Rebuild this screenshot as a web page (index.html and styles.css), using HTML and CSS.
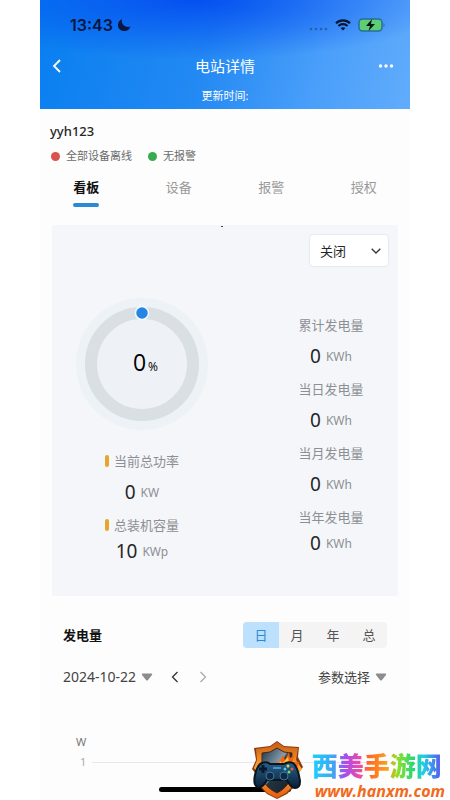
FILE: index.html
```html
<!DOCTYPE html>
<html lang="zh-CN">
<head>
    <meta charset="UTF-8">
    <meta name="viewport" content="width=device-width, initial-scale=1">
    <title>电站详情</title>
    <link rel="stylesheet" href="styles.css">
</head>
<body>
    <div class="app">
        <header class="header">
            <div class="status-bar">
                <span class="clock">13:43</span>
                <svg class="moon" width="14" height="14" viewBox="0 0 14 14"><path d="M5 1C3.600 5.500 8 10.300 13.500 8.500C12.500 11.800 9.500 13.500 6.300 13C3 12.500 .8 10 1 6.700C1.200 4 2.800 1.900 5 1Z" fill="#0a1740"/></svg>
                <span class="status-icons">
                    <svg width="20" height="4" viewBox="0 0 20 4" fill="#2a5ea8"><circle cx="3" cy="2" r="1.300"/><circle cx="8" cy="2" r="1.300"/><circle cx="13" cy="2" r="1.300"/><circle cx="18" cy="2" r="1.300"/></svg>
                    <svg width="16" height="12" viewBox="0 0 16 12" fill="none" stroke="#08152f" stroke-width="2.200"><path d="M1 4.300C5 .4 11 .4 15 4.300M3.500 7C6 4.600 10 4.600 12.500 7"/><path d="M5.600 9.100C7 7.900 9 7.900 10.400 9.100L8 11.600Z" fill="#08152f" stroke="none"/></svg>
                    <svg width="28" height="14" viewBox="0 0 28 14"><rect x="1" y="1" width="23" height="12" rx="3.500" fill="#5bcf72" stroke="#2b6c9c" stroke-width="1.500"/><path d="M25.500 5V9C27 8.500 27 5.500 25.500 5Z" fill="#2b6c9c"/><path d="M14 1L8 8H12L10.500 13L17 6H13Z" fill="#06151c"/></svg>
                </span>
            </div>
            <nav class="nav-bar">
                <button class="icon-btn" type="button" aria-label="返回">
                    <svg width="10" height="14" viewBox="0 0 10 14"><path d="M8 1L2 7L8 13" fill="none" stroke="#fff" stroke-width="1.800"/></svg>
                </button>
                <h1 class="title">电站详情</h1>
                <button class="icon-btn icon-btn-right" type="button" aria-label="更多">
                    <svg width="16" height="4" viewBox="0 0 16 4" fill="#fff"><circle cx="2.500" cy="2" r="1.700"/><circle cx="8" cy="2" r="1.700"/><circle cx="13.500" cy="2" r="1.700"/></svg>
                </button>
            </nav>
            <p class="updated">更新时间:</p>
        </header>

        <main class="sheet">
            <h2 class="station">yyh123</h2>
            <div class="states">
                <span class="state offline">全部设备离线</span>
                <span class="state normal">无报警</span>
            </div>

            <div class="tabs">
                <button class="tab active" type="button">看板</button>
                <button class="tab" type="button">设备</button>
                <button class="tab" type="button">报警</button>
                <button class="tab" type="button">授权</button>
            </div>

            <section class="panel">
                <div class="panel-top">
                    <select class="mode" aria-label="刷新">
                        <option>关闭</option>
                    </select>
                </div>
                <div class="overview">
                    <div class="column">
                        <div class="dial">
                            <svg class="dial-ring" viewBox="0 0 132 132">
                                <circle cx="66" cy="66" r="66" fill="#edf2f7"/>
                                <circle cx="66" cy="66" r="51" fill="#eef2f6" stroke="#d9dfe2" stroke-width="12"/>
                                <circle cx="66" cy="15" r="6.500" fill="#2585e2" stroke="#f5fbff" stroke-width="1.500"/>
                            </svg>
                            <p class="dial-value">0<small>%</small></p>
                        </div>
                        <dl class="stats marked">
                            <dt>当前总功率</dt>
                            <dd>0 <small>KW</small></dd>
                            <dt>总装机容量</dt>
                            <dd class="near">10 <small>KWp</small></dd>
                        </dl>
                    </div>
                    <dl class="stats">
                        <dt>累计发电量</dt>
                        <dd>0 <small>KWh</small></dd>
                        <dt>当日发电量</dt>
                        <dd>0 <small>KWh</small></dd>
                        <dt>当月发电量</dt>
                        <dd>0 <small>KWh</small></dd>
                        <dt>当年发电量</dt>
                        <dd class="near">0 <small>KWh</small></dd>
                    </dl>
                </div>
            </section>

            <section class="output">
                <div class="row">
                    <h3 class="output-title">发电量</h3>
                    <div class="periods">
                        <button class="period active" type="button">日</button>
                        <button class="period" type="button">月</button>
                        <button class="period" type="button">年</button>
                        <button class="period" type="button">总</button>
                    </div>
                </div>
                <div class="row filters">
                    <div class="date-nav">
                        <button class="date" type="button"><span class="day">2024-10-22</span>
                            <svg width="12" height="8" viewBox="0 0 12 8"><path d="M1.500 .5H10.500Q11.800 .6 11 2L7 7Q6 8 5 7L1 2Q.2 .6 1.500 .5Z" fill="#8c8c8c"/></svg>
                        </button>
                        <button class="step" type="button" aria-label="前一天"><svg width="8" height="12" viewBox="0 0 8 12"><path d="M6.500 1L1.500 6L6.500 11" fill="none" stroke="#333" stroke-width="1.300"/></svg></button>
                        <button class="step" type="button" aria-label="后一天"><svg width="8" height="12" viewBox="0 0 8 12"><path d="M1.500 1L6.500 6L1.500 11" fill="none" stroke="#aaa" stroke-width="1.300"/></svg></button>
                    </div>
                    <button class="date" type="button">参数选择
                        <svg width="12" height="8" viewBox="0 0 12 8"><path d="M1.500 .5H10.500Q11.800 .6 11 2L7 7Q6 8 5 7L1 2Q.2 .6 1.500 .5Z" fill="#8c8c8c"/></svg>
                    </button>
                </div>
                <div class="chart">
                    <span class="unit">W</span>
                    <div class="grid-line"><span class="tick">1</span></div>
                </div>
            </section>
        </main>
    </div>

    <div class="home-indicator"></div>

    <aside class="watermark">
        <svg class="badge" viewBox="0 0 54 60">
            <defs>
                <linearGradient id="fire" x1="0" y1="0" x2="0" y2="1"><stop offset="0" stop-color="#c75a12"/><stop offset=".5" stop-color="#ffad3a"/><stop offset="1" stop-color="#e5590f"/></linearGradient>
                <linearGradient id="steel" x1="0" y1="0" x2="1" y2="1"><stop offset="0" stop-color="#1b3448"/><stop offset=".45" stop-color="#8ba0ad"/><stop offset=".5" stop-color="#26333f"/><stop offset="1" stop-color="#10202e"/></linearGradient>
                <linearGradient id="pad" x1="0" y1="0" x2="0" y2="1"><stop offset="0" stop-color="#28628e"/><stop offset="1" stop-color="#0b1f35"/></linearGradient>
            </defs>
            <path d="M27 1L34 6L49 7L48 17L53 27L48 34L46 45L37 54L27 59L17 54L8 45L6 34L2 29L6 20L4 8L20 6Z" fill="#8a3a10"/>
            <path d="M27 2L34 7L48 8L46 20L52 29L47 34L45 44L36 53L27 58L17 53L9 44L7 32L4 28L7 20L6 9L20 7Z" fill="url(#fire)"/>
            <path d="M27 8L34 12L42 13L41 38Q37 48 27 53Q16 48 12 38L12 13L20 12Z" fill="url(#steel)" stroke="#4b2413"/>
            <path d="M22 27L27 21L28 24L33 15L35 20L39 12L40 18L45 15L42 22L49 22L45 34H20Z" fill="#f3650b"/>
            <path d="M25 27L31 21L32 24L38 17L39 23L44 21L40 31H25Z" fill="#ffc34c"/>
            <path d="M12 23Q17 21 20 24H34Q38 21 43 23Q48 27 50 41Q50 48 45 48Q41 48 37 40H17Q12 49 7 47Q3 44 5 35Q7 25 12 23Z" fill="url(#pad)" stroke="#081522" stroke-width="2"/>
            <path d="M13 25V33M9 29H17" stroke="#0a192a" stroke-width="3"/>
            <circle cx="20" cy="36" r="4" fill="#102a43" stroke="#3d789e"/>
            <circle cx="34" cy="36" r="4" fill="#102a43" stroke="#3d789e"/>
            <circle cx="38" cy="26" r="1.500" fill="#e7d447"/><circle cx="35" cy="29" r="1.500" fill="#4cd0e8"/><circle cx="42" cy="29" r="1.500" fill="#f1554b"/><circle cx="39" cy="32" r="1.500" fill="#7add66"/>
            <path d="M23 28H31" stroke="#4d92bf" stroke-width="2"/>
        </svg>
        <div class="brand">
            <strong class="brand-name">西美手游网</strong>
            <span class="brand-url">www.hanxm.com</span>
        </div>
    </aside>
</body>
</html>
```

FILE: styles.css
```css
:root {
    --blue: #2a8ad4;
    --text: #262626;
    --muted: #8d8f93;
    --panel: #f4f6fa;
}

* {
    margin: 0;
    padding: 0;
    box-sizing: border-box;
}

body {
    position: relative;
    min-height: 100vh;
    padding: 0 40px;
    overflow: hidden;
    background: #fff;
    color: var(--text);
    font-family: "Noto Sans", "Noto Sans CJK SC", sans-serif;
    font-size: 13px;
    line-height: 20px;
}

button,
select {
    border: 0;
    background: none;
    color: inherit;
    font: inherit;
    cursor: pointer;
}

svg {
    display: block;
    flex: none;
}

.app {
    min-height: 100vh;
    background: #fdfdfd;
}

/* Header */
.header {
    padding-top: 14px;
    height: 109px;
    color: #fff;
    background:
        radial-gradient(ellipse 260px 60px at 42% 0, rgba(0, 70, 240, 0.85), rgba(0, 90, 240, 0)),
        linear-gradient(105deg, #087ff0 0%, #2389f3 45%, #4a9ffa 75%, #61acfc 100%);
}

.status-bar {
    display: flex;
    align-items: center;
    height: 22px;
    padding: 0 24px 0 30px;
    gap: 4px;
}

.clock {
    color: #0a1740;
    font-family: Inter, sans-serif;
    font-size: 16px;
    font-weight: 600;
}

.status-icons {
    display: flex;
    align-items: center;
    gap: 7px;
    margin-left: auto;
}

.status-icons svg:first-child {
    margin-top: 8px;
}

.nav-bar {
    display: grid;
    grid-template-columns: 40px 1fr 40px;
    align-items: center;
    height: 40px;
    margin-top: 10px;
    padding: 0 12px;
}

.icon-btn {
    display: flex;
    align-items: center;
    height: 32px;
}

.icon-btn-right {
    justify-content: flex-end;
    padding-right: 4px;
}

.title {
    text-align: center;
    font-size: 15px;
    font-weight: 400;
}

.updated {
    text-align: center;
    font-size: 11px;
}

/* Station */
.sheet {
    padding: 12px 12px 0;
}

.station {
    font-size: 13px;
    font-weight: 500;
    margin-left: -2px;
}

.states {
    display: flex;
    gap: 16px;
    margin-top: 5px;
    margin-left: -1px;
    font-size: 11px;
    color: #6b6b6b;
}

.state {
    display: flex;
    align-items: center;
    gap: 6px;
}

.state::before {
    content: "";
    width: 9px;
    height: 9px;
    border-radius: 50%;
    background: #d9534f;
}

.normal::before {
    background: #37ab50;
}

.tabs {
    display: grid;
    grid-template-columns: repeat(4, 1fr);
    margin: 11px -12px 0;
}

.tab {
    display: flex;
    flex-direction: column;
    align-items: center;
    gap: 6px;
    height: 30px;
    color: #999;
}

.tab.active {
    color: #111;
    font-weight: 700;
}

.tab.active::after {
    content: "";
    width: 26px;
    height: 4px;
    border-radius: 2px;
    background: var(--blue);
}

/* Overview panel */
.panel {
    margin-top: 18px;
    padding: 9px 9px 22px;
    border-radius: 3px;
    background: var(--panel) linear-gradient(#444, #444) 49% 1px / 2px 1px no-repeat;
}

.panel-top {
    display: flex;
    justify-content: flex-end;
}

.mode {
    width: 80px;
    height: 33px;
    padding: 0 10px;
    border: 1px solid #e8eaed;
    border-radius: 4px;
    appearance: none;
    background: #fff url("data:image/svg+xml,%3Csvg xmlns='http://www.w3.org/2000/svg' width='10' height='6'%3E%3Cpath d='M.7.7L5 5L9.300.7' fill='none' stroke='%23333' stroke-width='1.300'/%3E%3C/svg%3E") no-repeat right 7px center;
}

.overview {
    display: grid;
    grid-template-columns: 162px 1fr;
    justify-items: center;
    padding-right: 2px;
}

.overview > .stats {
    padding: 48px 0 0 52px;
}

.dial {
    display: grid;
    place-items: center;
    width: 132px;
    margin-top: 31px;
}

.dial-ring,
.dial-value {
    grid-area: 1 / 1;
}

.dial-ring {
    width: 132px;
    height: 132px;
}

.dial-value {
    padding-left: 7px;
    color: #000;
    font-family: "Open Sans", sans-serif;
    font-size: 23px;
    font-weight: 500;
    line-height: 24px;
}

.dial-value small {
    margin-left: 2px;
    font-size: 12px;
}

.stats {
    color: var(--muted);
    text-align: center;
}

.stats dd {
    height: 26px;
    margin: 8px 0 10px;
    color: var(--text);
    font-size: 19px;
    line-height: 26px;
}

.stats dd.near {
    margin-top: 3px;
}

.stats small {
    color: var(--muted);
    font-size: 12px;
    vertical-align: 2px;
}

.marked {
    padding-top: 21px;
}

.marked dt::before {
    content: "";
    display: inline-block;
    width: 4px;
    height: 12px;
    margin-right: 5px;
    border-radius: 2px;
    background: #e5a52f;
    vertical-align: -1px;
}

/* Power output */
.output {
    padding: 26px 11px 0;
}

.row {
    display: flex;
    align-items: center;
    justify-content: space-between;
}

.output-title {
    font-size: 13px;
    font-weight: 700;
    color: #111;
}

.periods {
    display: flex;
    overflow: hidden;
    border-radius: 4px;
    background: #f4f4f4;
}

.period {
    width: 36px;
    height: 26px;
    color: #555;
}

.period.active {
    background: #bde0fc;
    color: var(--blue);
}

.filters {
    margin-top: 19px;
}

.date-nav {
    display: flex;
    gap: 16px;
}

.date {
    display: flex;
    align-items: center;
    gap: 5px;
    color: #444;
}

.day {
    font-size: 14px;
}

.step {
    width: 12px;
    display: flex;
    align-items: center;
    justify-content: center;
}

.chart {
    padding: 45px 0 0 13px;
    color: #777;
    font-size: 11px;
}

.unit {
    display: block;
}

.grid-line {
    display: flex;
    align-items: center;
    gap: 6px;
    padding-left: 4px;
    color: #aaa;
}

.grid-line::after {
    content: "";
    flex: 1;
    height: 1px;
    background: #e8e8e8;
}

/* Overlays */
.home-indicator {
    position: absolute;
    bottom: 8px;
    left: 50%;
    width: 132px;
    height: 5px;
    transform: translateX(-50%);
    border-radius: 3px;
    background: #000;
}

.watermark {
    position: absolute;
    right: 5px;
    bottom: 0;
    display: flex;
    align-items: flex-end;
    gap: 6px;
}

.badge {
    width: 54px;
    height: 60px;
    margin-right: 2px;
}

.brand {
    display: flex;
    flex-direction: column;
    align-items: flex-start;
}

.brand-name {
    font-family: "Noto Sans CJK SC", sans-serif;
    font-size: 26px;
    font-weight: 900;
    line-height: 34px;
    color: transparent;
    background: linear-gradient(90deg, #1ccfff 0%, #3ca8f4 16%, #a64cf0 25%, #ee4ba6 37%, #ff6b20 44%, #ff9a20 57%, #8be026 66%, #27d878 78%, #20ccea 86%, #5c50ee 100%);
    background-clip: text;
    -webkit-background-clip: text;
}

.brand-url {
    padding-left: 3px;
    font-family: "Open Sans", sans-serif;
    font-size: 16px;
    font-style: italic;
    font-weight: 700;
    line-height: 18px;
    color: #f26a1b;
}
```
